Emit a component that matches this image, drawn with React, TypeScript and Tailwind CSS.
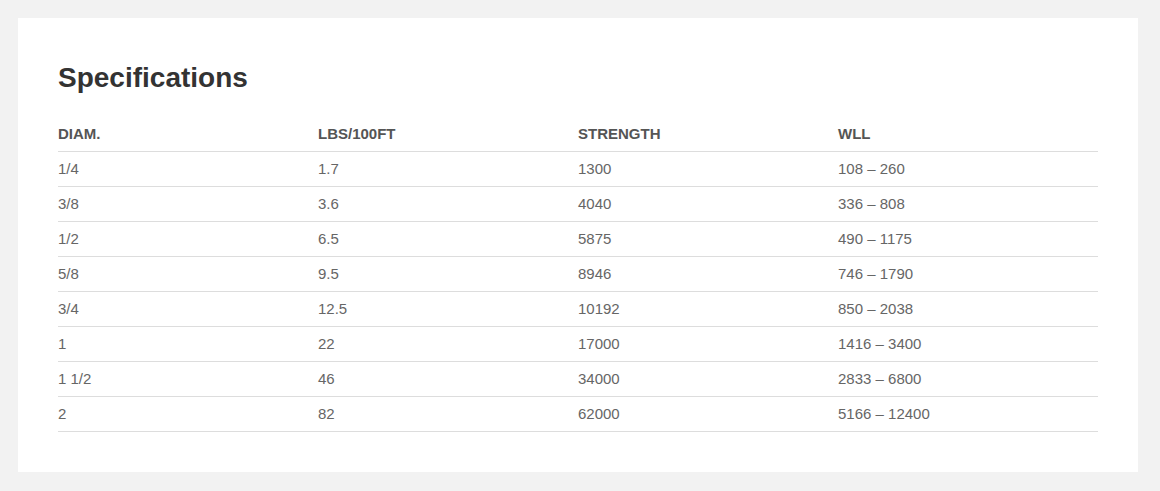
import React from 'react'

const rows = [
  ['1/4', '1.7', '1300', '108 – 260'],
  ['3/8', '3.6', '4040', '336 – 808'],
  ['1/2', '6.5', '5875', '490 – 1175'],
  ['5/8', '9.5', '8946', '746 – 1790'],
  ['3/4', '12.5', '10192', '850 – 2038'],
  ['1', '22', '17000', '1416 – 3400'],
  ['1 1/2', '46', '34000', '2833 – 6800'],
  ['2', '82', '62000', '5166 – 12400'],
]

const headers = ['DIAM.', 'LBS/100FT', 'STRENGTH', 'WLL']

export default function App() {
  return (
    <div className="min-h-[491px] bg-[#f2f2f2] pt-[18px] pb-[19px] font-['Liberation_Sans',Arial,sans-serif]">
      <div className="ml-[18px] w-[1120px] bg-white p-10">
        <h2 className="text-[28px] leading-[40px] font-bold text-[#333] mb-[19px]">Specifications</h2>
        <table className="w-[1040px] table-fixed border-collapse">
          <thead>
            <tr className="border-b border-[#dddddd]">
              {headers.map((h) => (
                <th key={h} className="w-[260px] text-left text-[15px] leading-5 font-bold text-[#555] py-[7px] px-0">
                  {h}
                </th>
              ))}
            </tr>
          </thead>
          <tbody>
            {rows.map((r, i) => (
              <tr key={i} className="border-b border-[#dddddd]">
                {r.map((c, j) => (
                  <td key={j} className="text-[15px] leading-5 text-[#666] py-[7px] px-0">
                    {c}
                  </td>
                ))}
              </tr>
            ))}
          </tbody>
        </table>
      </div>
    </div>
  )
}
